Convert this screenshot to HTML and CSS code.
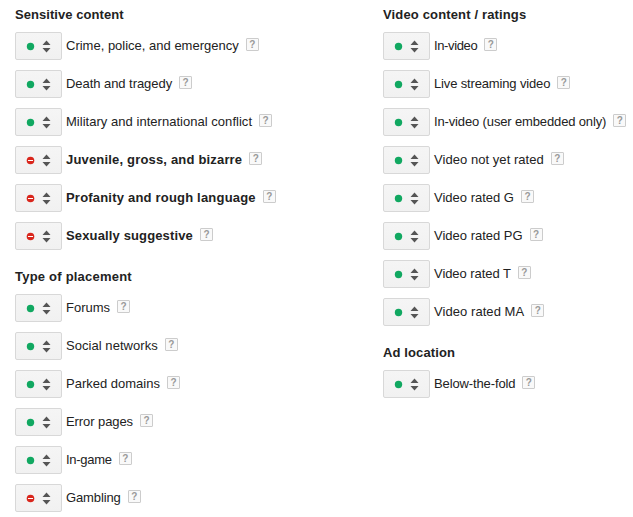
FILE: index.html
```
<!DOCTYPE html>
<html lang="en">
<head>
<meta charset="UTF-8">
<title>Site category options</title>
<link rel="stylesheet" href="styles.css">
</head>
<body>

<div class="columns">
    <div class="column" id="left"></div>
    <div class="column" id="right"></div>
</div>

<script src="script.js"></script>
</body>
</html>
```
FILE: styles.css
```
body {
    font-family: Arial, "Liberation Sans", sans-serif;
    font-size: 13px;
    color: #222;
    background: #fff;
    margin: 0;
    padding: 6px 0 0 15px;
}
.columns {
    display: grid;
    grid-template-columns: 368px 250px;
}
.group {
    margin-bottom: 18px;
}
.group h2 {
    font-size: 13px;
    line-height: 18px;
    margin: 0 0 8px 0;
}
.row {
    display: flex;
    align-items: flex-start;
    height: 28px;
    margin-bottom: 10px;
}
.row:last-child {
    margin-bottom: 0;
}
.toggle {
    box-sizing: border-box;
    width: 47px;
    height: 28px;
    padding: 0;
    border: 1px solid #d8d8d8;
    border-radius: 2px;
    background: linear-gradient(#f5f5f5, #f1f1f1);
    cursor: pointer;
}
.toggle svg {
    display: block;
}
.label {
    margin-left: 4px;
    line-height: 28px;
    white-space: nowrap;
}
.strong .label {
    font-weight: bold;
}
.help {
    box-sizing: border-box;
    width: 13px;
    height: 13px;
    margin: 6px 0 0 7px;
    border: 1px solid #ccc;
    border-radius: 1px;
    background: #f9f9f9;
    color: #999;
    font-size: 10px;
    font-weight: bold;
    line-height: 11px;
    text-align: center;
}
```
FILE: script.js
```
// name, letter spacing, excluded, bold
const left = [
    { title: 'Sensitive content', spacing: 0.06, rows: [
        ['Crime, police, and emergency', 0],
        ['Death and tragedy', -0.05],
        ['Military and international conflict', 0.03],
        ['Juvenile, gross, and bizarre', 0.18, true, true],
        ['Profanity and rough language', 0.2, true, true],
        ['Sexually suggestive', 0.14, true, true]
    ]},
    { title: 'Type of placement', spacing: 0.22, rows: [
        ['Forums', 0],
        ['Social networks', 0.05],
        ['Parked domains', 0],
        ['Error pages', -0.08],
        ['In-game', -0.27],
        ['Gambling', -0.12, true]
    ]}
];

const right = [
    { title: 'Video content / ratings', spacing: 0.15, rows: [
        ['In-video', -0.37],
        ['Live streaming video', -0.15],
        ['In-video (user embedded only)', -0.14],
        ['Video not yet rated', 0.05],
        ['Video rated G', 0],
        ['Video rated PG', 0],
        ['Video rated T', -0.06],
        ['Video rated MA', 0.06]
    ]},
    { title: 'Ad location', spacing: 0.12, rows: [
        ['Below-the-fold', -0.12]
    ]}
];

function renderRow([name, spacing, excluded, strong]) {
    const status = excluded
        ? '<circle cx="14.5" cy="13.5" r="3.8" fill="#d9261c"/><path d="M12 13h5v1h-5z" fill="#fff"/>'
        : '<circle cx="14.5" cy="13.5" r="3.7" fill="#11a861"/>';
    return `
        <div class="row ${strong ? 'strong' : ''}">
            <button class="toggle" type="button">
                <svg width="45" height="26">
                    ${status}
                    <path d="M26.5 12l4-4.5 4 4.5zM26.5 15h8l-4 4.5z" fill="#555"/>
                </svg>
            </button>
            <span class="label" style="letter-spacing: ${spacing}px">${name}</span>
            <span class="help">?</span>
        </div>
    `;
}

function renderColumn(id, groups) {
    document.getElementById(id).innerHTML = groups.map(group => `
        <div class="group">
            <h2 style="letter-spacing: ${group.spacing}px">${group.title}</h2>
            ${group.rows.map(renderRow).join('')}
        </div>
    `).join('');
}

renderColumn('left', left);
renderColumn('right', right);
```
